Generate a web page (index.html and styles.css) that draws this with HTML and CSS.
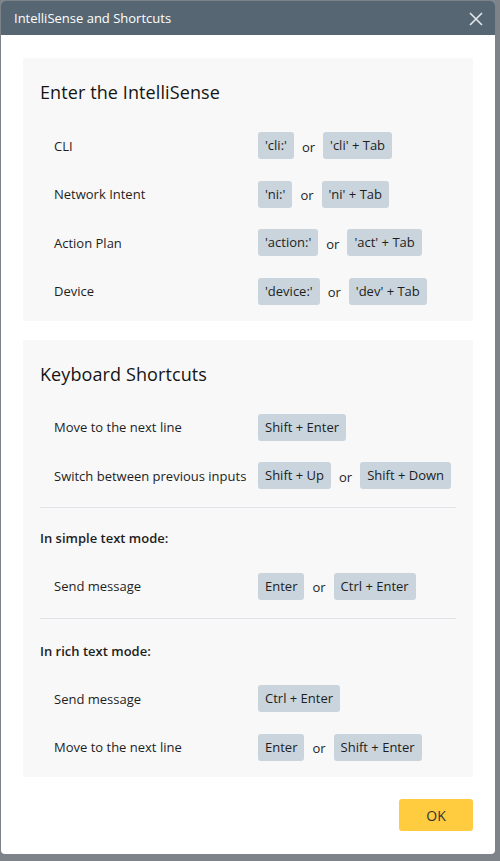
FILE: index.html
```html
<!DOCTYPE html>
<html>
<head>
<meta charset="utf-8">
<link rel="stylesheet" href="styles.css">
</head>
<body>
<div class="dialog">
  <div class="header">
    <span class="title">IntelliSense and Shortcuts</span>
    <svg class="close" width="14" height="14" viewBox="0 0 14 14"><path d="M1 1L13 13M13 1L1 13" stroke="#e4e8eb" stroke-width="1.6" fill="none"/></svg>
  </div>
  <div class="content">
    <div class="panel">
      <div class="panel-title">Enter the IntelliSense</div>
      <div class="row"><span class="label">CLI</span><span class="chip">'cli:'</span><span class="or">or</span><span class="chip">'cli' + Tab</span></div>
      <div class="row"><span class="label">Network Intent</span><span class="chip">'ni:'</span><span class="or">or</span><span class="chip">'ni' + Tab</span></div>
      <div class="row"><span class="label">Action Plan</span><span class="chip">'action:'</span><span class="or">or</span><span class="chip">'act' + Tab</span></div>
      <div class="row"><span class="label">Device</span><span class="chip">'device:'</span><span class="or">or</span><span class="chip">'dev' + Tab</span></div>
    </div>
    <div class="panel">
      <div class="panel-title">Keyboard Shortcuts</div>
      <div class="row"><span class="label">Move to the next line</span><span class="chip">Shift + Enter</span></div>
      <div class="row"><span class="label">Switch between previous inputs</span><span class="chip">Shift + Up</span><span class="or">or</span><span class="chip">Shift + Down</span></div>
      <div class="divider"></div>
      <div class="subhead">In simple text mode:</div>
      <div class="row"><span class="label">Send message</span><span class="chip">Enter</span><span class="or">or</span><span class="chip">Ctrl + Enter</span></div>
      <div class="divider"></div>
      <div class="subhead second">In rich text mode:</div>
      <div class="row"><span class="label">Send message</span><span class="chip">Ctrl + Enter</span></div>
      <div class="row"><span class="label">Move to the next line</span><span class="chip">Enter</span><span class="or">or</span><span class="chip">Shift + Enter</span></div>
    </div>
  </div>
  <div class="footer">
    <button class="ok">OK</button>
  </div>
</div>
</body>
</html>
```
FILE: styles.css
```css
html, body {
  margin: 0;
  padding: 0;
}
body {
  width: 500px;
  height: 861px;
  background: #7d8388;
  font-family: "Open Sans", "DejaVu Sans", sans-serif;
  color: #1e1e1e;
  overflow: hidden;
  padding: 1px 0 0 1px;
  box-sizing: border-box;
}
.dialog {
  width: 494px;
  height: 853px;
  background: #ffffff;
  border-radius: 4px;
  overflow: hidden;
  display: flex;
  flex-direction: column;
}
.header {
  height: 34px;
  background: #566773;
  display: flex;
  align-items: center;
  justify-content: space-between;
  padding: 0 12px 0 13px;
  flex-shrink: 0;
}
.title {
  color: #ffffff;
  font-size: 13px;
  line-height: 18px;
}
.close {
  display: block;
  margin-top: 1px;
}
.content {
  padding: 23px 22px 0;
  display: flex;
  flex-direction: column;
  gap: 19px;
}
.panel {
  background: #f8f8f8;
  padding: 19px 17px 16px;
}
.panel-title {
  font-size: 18px;
  line-height: 30px;
  margin-bottom: 25px;
  color: #141414;
  letter-spacing: 0.1px;
}
.row {
  height: 27px;
  display: flex;
  align-items: center;
  padding-left: 14px;
  font-size: 13px;
}
.row + .row {
  margin-top: 21.5px;
}
.label {
  width: 204px;
  flex-shrink: 0;
}
.chip {
  background: #c9d4dc;
  border-radius: 3px;
  height: 27px;
  line-height: 27px;
  padding: 0 7px;
  font-size: 13px;
  color: #1e1e1e;
}
.or {
  margin: 2px 8px 0;
}
.divider {
  height: 1px;
  background: #e0e4e8;
  margin-top: 18px;
}
.subhead {
  font-size: 13px;
  font-weight: 600;
  line-height: 20px;
  margin: 20px 0 24.5px;
}
.subhead.second {
  margin: 22px 0 24.5px;
}
.footer {
  display: flex;
  justify-content: flex-end;
  padding: 22.5px 22px 0;
}
.ok {
  width: 74px;
  height: 32px;
  background: #ffcb3f;
  border: none;
  border-radius: 3px;
  font-family: "Open Sans", "DejaVu Sans", sans-serif;
  font-size: 14px;
  color: #333333;
  padding: 0;
}
```
